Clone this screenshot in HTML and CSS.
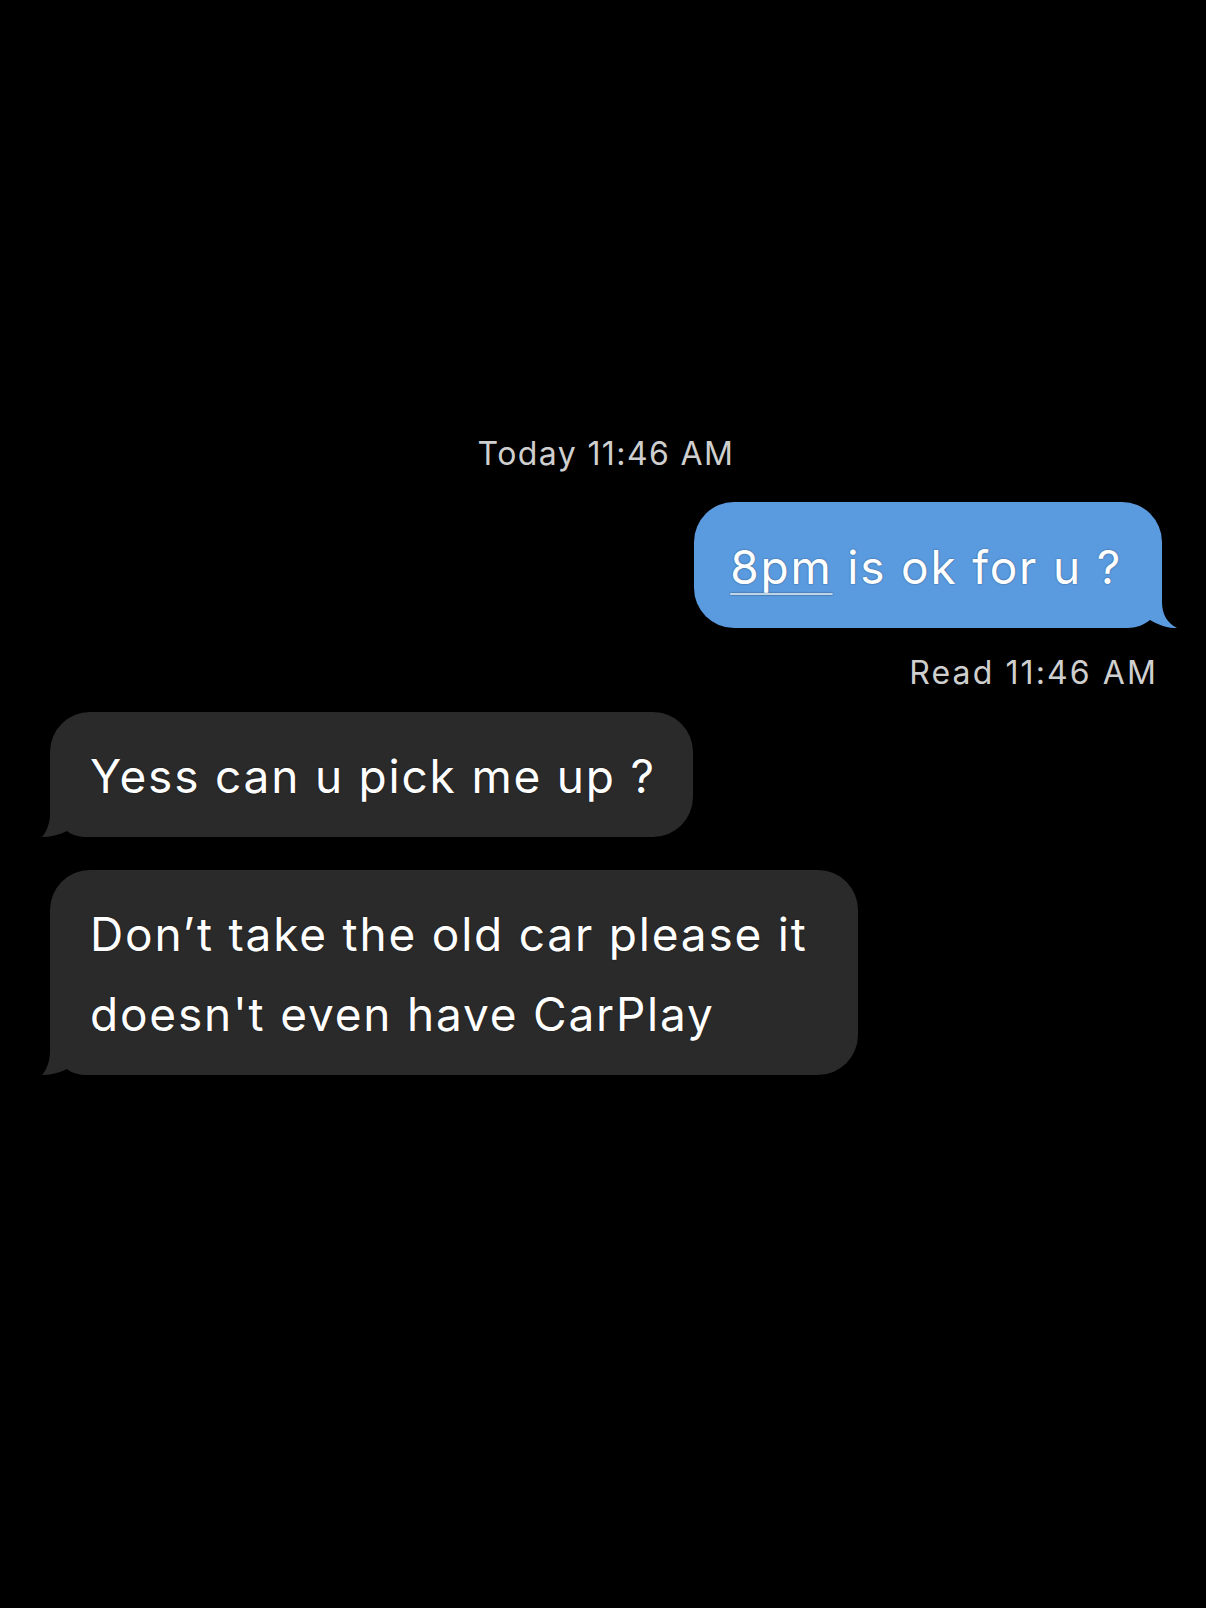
FILE: index.html
```html
<!DOCTYPE html>
<html lang="en">
<head>
<meta charset="utf-8">
<title>Messages</title>
<link rel="stylesheet" href="styles.css">
</head>
<body>
<main class="thread">
  <div class="stamp">Today 11:46 AM</div>

  <div class="bubble sent">
    <span class="link">8pm</span> is ok for u ?
    <svg class="tail tail-sent" viewBox="0 0 60 48" aria-hidden="true"><path d="M0 0 H45 V22 C45 34 50 43 60 48 C52 48.5 41 45 33 40 C27 45 19 48 10 48 H0 Z"/></svg>
  </div>
  <div class="status">Read 11:46 AM</div>

  <div class="bubble recv">
    Yess can u pick me up ?
    <svg class="tail tail-recv" viewBox="0 0 56 46" aria-hidden="true"><path d="M56 0 H8 V22 C8 32 5 40 0 46 C8 46 17 44 25 40 C30 44 37 46 46 46 H56 Z"/></svg>
  </div>

  <div class="bubble recv recv-wide">
    Don’t take the old car please it<br>doesn't even have CarPlay
    <svg class="tail tail-recv" viewBox="0 0 56 46" aria-hidden="true"><path d="M56 0 H8 V22 C8 32 5 40 0 46 C8 46 17 44 25 40 C30 44 37 46 46 46 H56 Z"/></svg>
  </div>
</main>
</body>
</html>
```

FILE: styles.css
```css
html, body {
  margin: 0;
  padding: 0;
  background: #000;
}

body {
  width: 1206px;
  height: 1608px;
  overflow: hidden;
  font-family: Inter, "Liberation Sans", Arial, sans-serif;
  color: #fff;
}

.thread {
  display: flex;
  flex-direction: column;
  padding: 434px 44px 0 50px;
}

.stamp,
.status {
  font-size: 32px;
  line-height: 40px;
  color: #cfcfcf;
}

.stamp {
  align-self: center;
  letter-spacing: 1.4px;
}

.status {
  align-self: flex-end;
  margin-top: 25px;
  margin-right: 4px;
  letter-spacing: 2.1px;
}

.bubble {
  position: relative;
  font-size: 46px;
  line-height: 80px;
  letter-spacing: 1.8px;
  border-radius: 40px;
  white-space: nowrap;
  text-shadow: 0 0 2px rgba(0, 0, 0, 0.45);
}

.sent {
  align-self: flex-end;
  margin-top: 28px;
  padding: 25px 40px 21px 36px;
  background: #5a9be0;
}

.recv {
  align-self: flex-start;
  padding: 24px 37px 21px 40px;
  background: #2a2a2b;
}

.status + .recv {
  margin-top: 19px;
}

.recv + .recv {
  margin-top: 33px;
}

.recv-wide {
  padding-right: 50px;
}

.link {
  text-decoration: underline;
  text-decoration-color: rgba(235, 245, 255, 0.75);
  text-decoration-thickness: 1.5px;
  text-underline-offset: 9px;
}

.tail {
  position: absolute;
  bottom: 0;
  display: block;
}

.tail-sent {
  right: -15px;
  width: 60px;
  height: 48px;
  fill: #5a9be0;
}

.tail-recv {
  left: -8px;
  width: 56px;
  height: 46px;
  fill: #2a2a2b;
}
```
